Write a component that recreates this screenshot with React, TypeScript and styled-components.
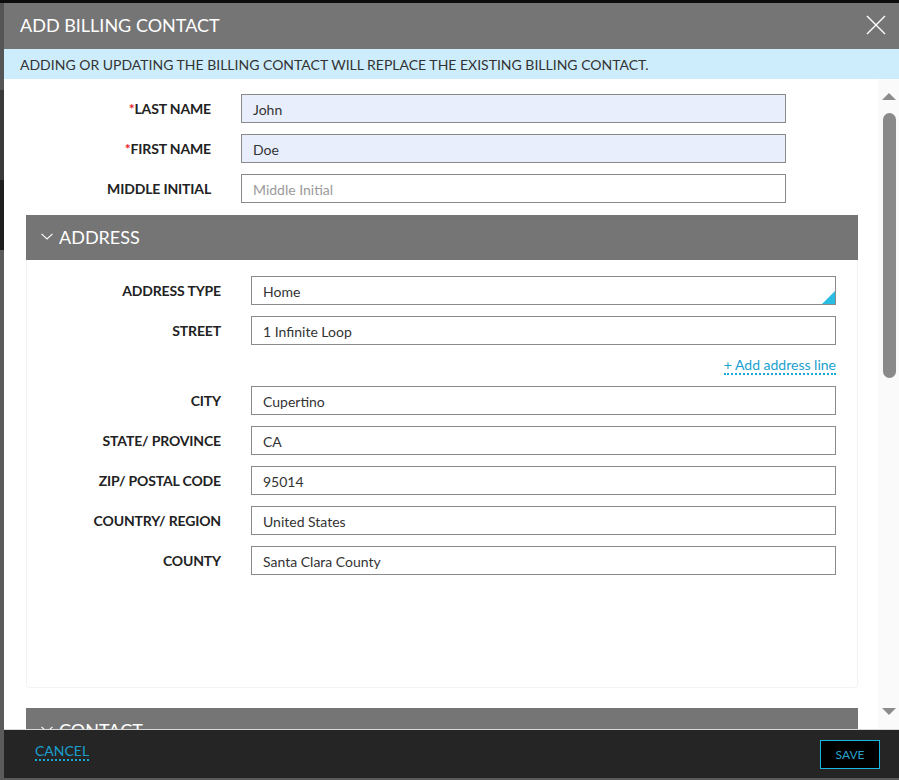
import styled, { createGlobalStyle } from "styled-components";

const GlobalStyle = createGlobalStyle`
  html, body {
    margin: 0;
    padding: 0;
  }
  body {
    background: #4f4f4f;
    font-family: Lato, "Open Sans", "Liberation Sans", sans-serif;
  }
  * {
    box-sizing: border-box;
  }
`;

const Page = styled.div`
  width: 899px;
  height: 780px;
  padding: 3px 0 0 4px;
  background: linear-gradient(to bottom, #0d0d0d 0 3px, #555 3px 90px, #3a3a3a 90px 180px, #1e1e1e 180px 250px, #5b5b5b 250px);
  overflow: hidden;
`;

const Modal = styled.div`
  width: 895px;
  height: 775px;
  display: flex;
  flex-direction: column;
  background: #ffffff;
`;

const Header = styled.header`
  height: 46px;
  flex: none;
  display: flex;
  align-items: center;
  justify-content: space-between;
  padding: 0 12px 3px 16px;
  background: #757575;
`;

const Title = styled.h1`
  margin: 0;
  font-size: 18px;
  font-weight: 400;
  color: #ffffff;
`;

const CloseButton = styled.button`
  width: 22px;
  height: 22px;
  padding: 0;
  border: none;
  background: transparent;
  display: flex;
  align-items: center;
  justify-content: center;
  cursor: pointer;
`;

const InfoBar = styled.div`
  height: 30px;
  flex: none;
  padding-left: 16px;
  line-height: 31px;
  font-size: 14px;
  color: #333333;
  background: #cdedfc;
`;

const BodyArea = styled.div`
  flex: 1;
  min-height: 0;
  display: flex;
  overflow: hidden;
`;

const Content = styled.div`
  flex: 1;
  padding: 15px 20px 0 22px;
  overflow: hidden;
`;

const ScrollTrack = styled.div`
  width: 21px;
  flex: none;
  display: flex;
  flex-direction: column;
  align-items: center;
  padding: 14px 0 14px 1px;
  background: #fafafa;
`;

const Arrow = styled.div<{ $dir: "up" | "down" }>`
  width: 0;
  height: 0;
  border-left: 7px solid transparent;
  border-right: 7px solid transparent;
  ${({ $dir }) =>
    $dir === "up"
      ? "border-bottom: 7px solid #8c8c8c;"
      : "border-top: 7px solid #8c8c8c; margin-top: auto;"}
`;

const Thumb = styled.div`
  width: 13px;
  height: 265px;
  margin-top: 13px;
  border-radius: 7px;
  background: #8a8a8a;
`;

const FieldGrid = styled.div<{ $label: number; $input: number }>`
  display: grid;
  grid-template-columns: ${({ $label }) => $label}px ${({ $input }) => $input}px;
  column-gap: 30px;
  row-gap: 11px;
  align-items: center;
`;

const Label = styled.label`
  text-align: right;
  font-size: 14px;
  font-weight: 700;
  letter-spacing: -0.15px;
  color: #222222;
`;

const Required = styled.span`
  color: #e8232a;
`;

const Input = styled.input<{ $filled?: boolean }>`
  height: 29px;
  width: 100%;
  padding: 1px 11px 0;
  border: 1px solid #8a8a8a;
  border-radius: 0;
  outline: none;
  font-family: Lato, "Open Sans", "Liberation Sans", sans-serif;
  font-size: 14px;
  color: #333333;
  background: ${({ $filled }) => ($filled ? "#e8eefc" : "#ffffff")};

  &::placeholder {
    color: #9a9a9a;
  }
`;

const Select = styled.div`
  position: relative;
  height: 29px;
  padding: 1px 11px 0;
  display: flex;
  align-items: center;
  border: 1px solid #8a8a8a;
  font-size: 14px;
  color: #333333;

  &::after {
    content: "";
    position: absolute;
    right: 0;
    bottom: 0;
    border-left: 13px solid transparent;
    border-bottom: 13px solid #29bde3;
  }
`;

const SectionHeader = styled.div<{ $gap: number }>`
  height: 45px;
  margin-top: ${({ $gap }) => $gap}px;
  display: flex;
  align-items: center;
  gap: 6px;
  padding: 0 0 2px 15px;
  background: #757575;
  font-size: 18px;
  color: #ffffff;
`;

const Card = styled.div`
  padding: 16px 21px 112px 0;
  border: 1px solid #f3f3f3;
  border-top: none;
  border-radius: 0 0 4px 4px;
`;

const LinkRow = styled.div`
  grid-column: 2;
  height: 19px;
  display: flex;
  justify-content: flex-end;
  align-items: flex-end;
`;

const TextLink = styled.a`
  font-size: 14px;
  line-height: 16px;
  color: #1a9fcf;
  text-decoration: none;
  border-bottom: 2px dotted #1aa8d6;
  cursor: pointer;
`;

const Footer = styled.footer`
  height: 49px;
  flex: none;
  display: flex;
  align-items: center;
  justify-content: space-between;
  padding: 0 19px 0 31px;
  background: #252525;
  border-top: 1px solid #d8d8d8;
`;

const CancelLink = styled(TextLink)`
  margin-bottom: 4px;
`;

const SaveButton = styled.button`
  width: 60px;
  height: 29px;
  padding: 0;
  border: 1px solid #1ab8e0;
  background: #000000;
  color: #2aa3c9;
  font-family: Lato, "Open Sans", "Liberation Sans", sans-serif;
  font-size: 12px;
  cursor: pointer;
`;

function Chevron() {
  return (
    <svg width="12" height="7" viewBox="0 0 12 7" fill="none">
      <path d="M0.5 0.8 L6 6 L11.5 0.8" stroke="#ffffff" strokeWidth="1.1" />
    </svg>
  );
}

function CloseIcon() {
  return (
    <svg width="20" height="20" viewBox="0 0 20 20" fill="none">
      <path d="M1 1 L19 19 M19 1 L1 19" stroke="#ffffff" strokeWidth="1.4" />
    </svg>
  );
}

const addressFields = [
  { label: "CITY", value: "Cupertino" },
  { label: "STATE/ PROVINCE", value: "CA" },
  { label: "ZIP/ POSTAL CODE", value: "95014" },
  { label: "COUNTRY/ REGION", value: "United States" },
  { label: "COUNTY", value: "Santa Clara County" },
];

export default function App() {
  return (
    <>
      <GlobalStyle />
      <Page>
        <Modal>
          <Header>
            <Title>ADD BILLING CONTACT</Title>
            <CloseButton aria-label="Close">
              <CloseIcon />
            </CloseButton>
          </Header>
          <InfoBar>
            ADDING OR UPDATING THE BILLING CONTACT WILL REPLACE THE EXISTING BILLING CONTACT.
          </InfoBar>

          <BodyArea>
            <Content>
              <FieldGrid $label={185} $input={545}>
                <Label>
                  <Required>*</Required>LAST NAME
                </Label>
                <Input $filled defaultValue="John" />
                <Label>
                  <Required>*</Required>FIRST NAME
                </Label>
                <Input $filled defaultValue="Doe" />
                <Label>MIDDLE INITIAL</Label>
                <Input placeholder="Middle Initial" />
              </FieldGrid>

              <SectionHeader $gap={12}>
                <Chevron />
                ADDRESS
              </SectionHeader>
              <Card>
                <FieldGrid $label={194} $input={585}>
                  <Label>ADDRESS TYPE</Label>
                  <Select>Home</Select>
                  <Label>STREET</Label>
                  <Input defaultValue="1 Infinite Loop" />
                  <LinkRow>
                    <TextLink>+ Add address line</TextLink>
                  </LinkRow>
                  {addressFields.map((f) => [
                    <Label key={f.label}>{f.label}</Label>,
                    <Input key={f.label + "-input"} defaultValue={f.value} />,
                  ])}
                </FieldGrid>
              </Card>

              <SectionHeader $gap={20}>
                <Chevron />
                CONTACT
              </SectionHeader>
            </Content>
            <ScrollTrack>
              <Arrow $dir="up" />
              <Thumb />
              <Arrow $dir="down" />
            </ScrollTrack>
          </BodyArea>

          <Footer>
            <CancelLink>CANCEL</CancelLink>
            <SaveButton>SAVE</SaveButton>
          </Footer>
        </Modal>
      </Page>
    </>
  );
}
